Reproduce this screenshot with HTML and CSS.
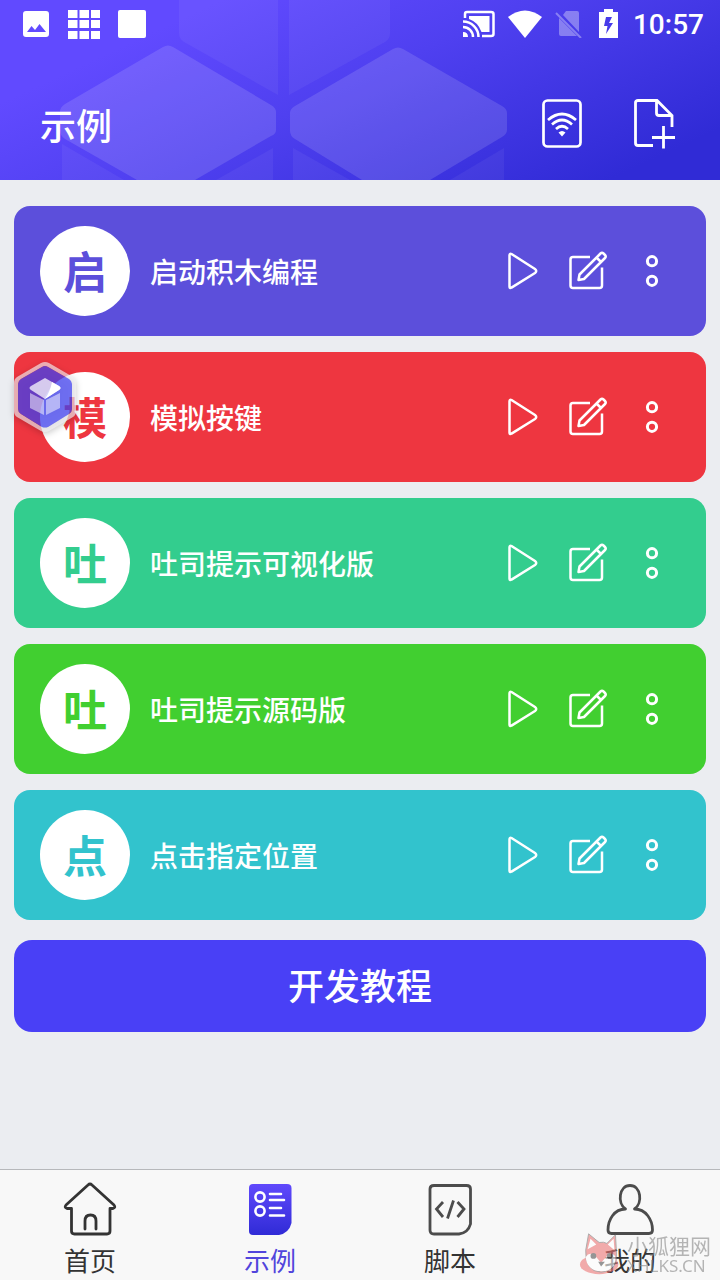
FILE: index.html
```
<!DOCTYPE html>
<html lang="zh-CN">
<head>
    <meta charset="UTF-8">
    <meta name="viewport" content="width=device-width, initial-scale=1.0">
    <title>示例</title>
    <link rel="stylesheet" href="styles.css">
</head>
<body>
    <!-- Shared icons -->
    <svg class="sprite" aria-hidden="true">
        <symbol id="icon-play" viewBox="0 0 44 44">
            <path d="M9.500 6.500V37.500Q9.500 40 11.500 38.600L35 24Q37.500 22 35 20L11.500 5Q9.500 4 9.500 6.500Z"/>
        </symbol>
        <symbol id="icon-edit" viewBox="0 0 44 44">
            <path d="M25 8H8Q5.500 8 5.500 10.500V36.500Q5.500 39 8 39H34.500Q37 39 37 36.500V18.500"/>
            <path d="M13.500 31L14.500 25.500L35.500 4.500Q37 3 38.500 4.500L40 6Q41.500 7.500 40 9L19 30ZM31.500 8.500L36 13"/>
        </symbol>
        <symbol id="icon-more" viewBox="0 0 44 44">
            <circle cx="22" cy="12.200" r="4.600"/>
            <circle cx="22" cy="31.800" r="4.600"/>
        </symbol>
    </svg>

    <header class="header">
        <svg class="header-pattern" viewBox="0 0 720 180" preserveAspectRatio="xMinYMin slice" aria-hidden="true">
            <g fill="#fff" fill-opacity="0.130">
                <path d="M163 47Q168 44 173 47L271 105Q276 108 276 112V130Q276 134 271 136L195 180H137L65 139Q60 136 60 130V112Q60 107 65 104Z"/>
                <path d="M393 49Q398 46 403 49L502 106Q507 109 507 113V130Q507 134 502 137L430 180H362L295 139Q290 136 290 131V113Q290 109 295 106Z"/>
            </g>
            <g fill="#fff" fill-opacity="0.050">
                <path d="M179 0H278V95L184 42Q179 39 179 33Z"/>
                <path d="M289 0H390V33Q390 39 385 42L289 95Z"/>
                <path d="M62 144L124 180H62Z"/>
                <path d="M273 148V180H216Z"/>
                <path d="M293 148L350 180H293Z"/>
                <path d="M504 148V180H450Z"/>
            </g>
        </svg>

        <div class="status-bar">
            <div class="status-group status-left">
                <svg width="28" height="28" viewBox="0 0 28 28" aria-hidden="true">
                    <path fill="#fff" fill-rule="evenodd" d="M4 1H24Q27 1 27 4V24Q27 27 24 27H4Q1 27 1 24V4Q1 1 4 1ZM5 22H24L17.500 14L13 20L9.500 16Z"/>
                </svg>
                <svg width="32" height="30" viewBox="0 0 32 30" fill="#fff" aria-hidden="true">
                    <path d="M0 1h9.500v8H0zM11.500 1h9.500v8h-9.500zM23 1h9v8h-9zM0 11h9.500v8H0zM11.500 11h9.500v8h-9.500zM23 11h9v8h-9zM0 22h9.500v8H0zM11.500 22h9.500v8h-9.500zM23 22h9v8h-9z"/>
                </svg>
                <svg width="28" height="28" viewBox="0 0 28 28" fill="#fff" aria-hidden="true">
                    <rect width="28" height="28" rx="2"/>
                </svg>
            </div>
            <div class="status-group status-right">
                <svg width="32" height="28" viewBox="0 0 32 28" fill="none" stroke="#fff" stroke-width="2.500" aria-hidden="true">
                    <path d="M2 8V4Q2 2 4 2H28Q30.500 2 30.500 4V24Q30.500 26 28 26H19"/>
                    <path d="M0 11.500A15.500 15.500 0 0 1 15.500 27M0 17A10 10 0 0 1 10 27"/>
                    <path fill="#fff" stroke="none" d="M6 6H26.500V22H18.500Q15 12 6 9ZM0 22Q5 22 5 27H0Z"/>
                </svg>
                <svg width="36" height="28" viewBox="0 0 36 28" fill="#fff" aria-hidden="true">
                    <path d="M1 7Q18-6 35 7L18 28Z"/>
                </svg>
                <svg width="28" height="28" viewBox="0 0 28 28" opacity="0.340" aria-hidden="true">
                    <path fill="#fff" d="M11 1H22Q24 1 24 3V22L8 5ZM4 8L22 26H6Q4 26 4 24Z"/>
                    <path stroke="#fff" stroke-width="2" d="M1 3L26 28"/>
                </svg>
                <svg class="battery" width="20" height="30" viewBox="0 0 20 30" aria-hidden="true">
                    <path fill="#fff" fill-rule="evenodd" d="M5 0H14V3H19V29H0V3H5ZM7 8L5 17H8.500L7 25L14 14H10L13 8Z"/>
                </svg>
                <time class="clock">10:57</time>
            </div>
        </div>

        <div class="title-bar">
            <h1>示例</h1>
            <div class="title-actions">
                <button class="icon-btn" aria-label="无线连接">
                    <svg width="48" height="52" viewBox="0 0 48 52" fill="none" stroke="#fff" stroke-width="2.700" aria-hidden="true">
                        <rect x="5.500" y="2.500" width="37" height="46" rx="4"/>
                        <path d="M10 22Q24 10 38 22M14 26.500Q24 17.500 34 26.500M18 31Q24 25.500 30 31"/>
                        <path fill="#fff" stroke="none" d="M20.500 34.500Q24 31.500 27.500 34.500L24 38.500Z"/>
                    </svg>
                </button>
                <button class="icon-btn" aria-label="新建文件">
                    <svg width="48" height="52" viewBox="0 0 48 52" fill="none" stroke="#fff" stroke-width="2.800" aria-hidden="true">
                        <path d="M23 47.500H8Q5.500 47.500 5.500 45V4.500Q5.500 2.500 8 2.500H27L42 17.500V29M26.500 2.500V15Q26.500 17.500 29 17.500H42M33.500 28V50.500M22 39.500H45"/>
                    </svg>
                </button>
            </div>
        </div>
    </header>

    <!-- Script examples -->
    <main class="content">
        <ul class="card-list">
            <li class="card purple">
                <span class="avatar">启</span>
                <h2>启动积木编程</h2>
                <div class="card-actions">
                    <button aria-label="运行"><svg><use href="#icon-play"/></svg></button>
                    <button aria-label="编辑"><svg><use href="#icon-edit"/></svg></button>
                    <button class="more" aria-label="更多"><svg><use href="#icon-more"/></svg></button>
                </div>
            </li>
            <li class="card red">
                <span class="avatar">模</span>
                <h2>模拟按键</h2>
                <div class="card-actions">
                    <button aria-label="运行"><svg><use href="#icon-play"/></svg></button>
                    <button aria-label="编辑"><svg><use href="#icon-edit"/></svg></button>
                    <button class="more" aria-label="更多"><svg><use href="#icon-more"/></svg></button>
                </div>
            </li>
            <li class="card mint">
                <span class="avatar">吐</span>
                <h2>吐司提示可视化版</h2>
                <div class="card-actions">
                    <button aria-label="运行"><svg><use href="#icon-play"/></svg></button>
                    <button aria-label="编辑"><svg><use href="#icon-edit"/></svg></button>
                    <button class="more" aria-label="更多"><svg><use href="#icon-more"/></svg></button>
                </div>
            </li>
            <li class="card green">
                <span class="avatar">吐</span>
                <h2>吐司提示源码版</h2>
                <div class="card-actions">
                    <button aria-label="运行"><svg><use href="#icon-play"/></svg></button>
                    <button aria-label="编辑"><svg><use href="#icon-edit"/></svg></button>
                    <button class="more" aria-label="更多"><svg><use href="#icon-more"/></svg></button>
                </div>
            </li>
            <li class="card cyan">
                <span class="avatar">点</span>
                <h2>点击指定位置</h2>
                <div class="card-actions">
                    <button aria-label="运行"><svg><use href="#icon-play"/></svg></button>
                    <button aria-label="编辑"><svg><use href="#icon-edit"/></svg></button>
                    <button class="more" aria-label="更多"><svg><use href="#icon-more"/></svg></button>
                </div>
            </li>
        </ul>
        <button class="tutorial-btn">开发教程</button>
    </main>

    <!-- Bottom tabs -->
    <nav class="tab-bar">
        <a class="tab" href="#home">
            <svg width="56" height="56" viewBox="0 0 56 56" fill="none" stroke="#333" stroke-width="2.800" stroke-linejoin="round" stroke-linecap="round" aria-hidden="true">
                <path d="M9.500 27.500H5Q2 26.500 4 24L26 4Q28 2 30 4L52 24Q54 26.500 51 27.500H48V50Q48 53 45 53H12.500Q9.500 53 9.500 50Z"/>
                <path d="M23 48V40Q23 34 28.500 34T34 40V48"/>
            </svg>
            首页
        </a>
        <a class="tab active" href="#examples">
            <svg width="56" height="56" viewBox="0 0 56 56" aria-hidden="true">
                <defs>
                    <linearGradient id="tab-fill" x1="0" y1="0" x2="0" y2="1">
                        <stop offset="0" stop-color="#6049fc"/>
                        <stop offset="1" stop-color="#302bd6"/>
                    </linearGradient>
                </defs>
                <path fill="url(#tab-fill)" d="M11 3H45Q49.500 3 49.500 7V42Q47 52 37 54H11Q7 54 7 50V7Q7 3 11 3Z"/>
                <g fill="none" stroke="#fff" stroke-width="2.600" stroke-linecap="round">
                    <circle cx="18" cy="16" r="4.600"/>
                    <circle cx="18" cy="30" r="4.600"/>
                    <path d="M28 13H39M28 19H42M28 27H39M28 34.500H42"/>
                </g>
            </svg>
            示例
        </a>
        <a class="tab" href="#scripts">
            <svg width="56" height="56" viewBox="0 0 56 56" fill="none" stroke="#4c4c4c" stroke-width="2.800" aria-hidden="true">
                <path d="M12 4.500H44.500Q48.500 4.500 48.500 8V43Q46 52 37 53H12Q8 53 8 49V8Q8 4.500 12 4.500Z"/>
                <path d="M21 21L14.500 28L21 36M31.500 19.500L25.500 37.500M35.500 21L42 28L35.500 36"/>
            </svg>
            脚本
        </a>
        <a class="tab" href="#mine">
            <svg width="56" height="56" viewBox="0 0 56 56" fill="none" stroke="#4c4c4c" stroke-width="2.800" stroke-linejoin="round" aria-hidden="true">
                <path d="M23.500 28C15 22 17 4.500 28 4.500S41 22 32.500 28C44 28 50.500 39 50.500 49Q50.500 52.500 47 52.500H9.500Q6 52.500 6 49C6 39 12 28 23.500 28Z"/>
            </svg>
            我的
        </a>
    </nav>

    <!-- Floating assistant -->
    <button class="float-btn" aria-label="悬浮菜单">
        <svg width="64" height="72" viewBox="0 0 64 72" aria-hidden="true">
            <path fill="#f3f1f4" fill-opacity="0.650" fill-rule="evenodd" d="M28 2Q32 0 36 2L60 16Q63 18 63 22V50Q63 54 60 56L36 70Q32 72 28 70L4 56Q1 54 1 50V22Q1 18 4 16ZM29 6L8 18Q5 20 5 23V48Q5 51 8 53L29 66Q32 67 35 66L56 53Q59 51 59 48V23Q59 20 56 18L35 6Q32 4 29 6Z"/>
            <path fill="#4646ff" fill-opacity="0.700" d="M29 6Q32 4 35 6L56 18Q59 20 59 23V48Q59 51 56 53L35 66Q32 67 29 66L8 53Q5 51 5 48V23Q5 20 8 18Z"/>
            <path fill="#fff" fill-opacity="0.730" d="M32 17L46 25Q49 27 46 29L32 38L18 29Q15 27 18 25Z"/>
            <path fill="#fff" fill-opacity="0.500" d="M17 32L31 39V54L17 47ZM47 32L33 39V54L47 47Z"/>
            <path fill="#fff" d="M39 21L46 25Q49 27 46 29L32 38Q37 31 39 21Z"/>
        </svg>
    </button>

    <div class="watermark" aria-hidden="true">
        <svg width="48" height="44" viewBox="0 0 50 44">
            <ellipse cx="21" cy="33" rx="20" ry="10" fill="#ee7777"/>
            <path fill="#ee7777" stroke="#777" d="M7 18L10 1L21 10Q26 9 29 11L38 2L39 20Q41 40 23 41Q6 40 7 18Z"/>
            <path fill="#fff" d="M9 17L12 6L18 12ZM30 12L36 6L37 18ZM7 25Q11 19 17 24L23 31L30 23Q36 20 38 25Q38 40 23 40Q8 39 7 25Z"/>
            <circle cx="15" cy="24" r="3" fill="#555"/>
            <circle cx="32" cy="24" r="3" fill="#555"/>
            <path fill="#555" d="M20 30H27L23 35Z"/>
        </svg>
        <div class="watermark-text">
            <span>小狐狸网</span>
            <span class="watermark-url">XHLKS.CN</span>
        </div>
    </div>
</body>
</html>
```
FILE: styles.css
```
/* Global Styles */
* {
    margin: 0;
    padding: 0;
    box-sizing: border-box;
}

:root {
    --primary-color: #4940f6;
    --bg-color: #ebedf1;
    --text-color: #333;
}

body {
    position: relative;
    display: flex;
    flex-direction: column;
    min-height: 100vh;
    background-color: var(--bg-color);
    color: var(--text-color);
    font-family: "Noto Sans CJK SC", sans-serif;
}

button {
    border: none;
    background: none;
    color: inherit;
    font-family: inherit;
    cursor: pointer;
}

svg {
    display: block;
}

.sprite {
    position: absolute;
    width: 0;
    height: 0;
}

/* Header */
.header {
    position: relative;
    min-height: 180px;
    background: linear-gradient(155deg, #614aff 20%, #4f40f0 48%, #302bd6 90%);
    color: #fff;
}

.header-pattern {
    position: absolute;
    inset: 0;
    width: 100%;
    height: 100%;
}

.status-bar,
.title-bar {
    position: relative;
    display: flex;
    align-items: center;
    justify-content: space-between;
}

.status-bar {
    height: 48px;
    padding: 0 16px 0 22px;
}

.status-group {
    display: flex;
    align-items: center;
}

.status-left {
    gap: 18px;
}

.status-right {
    gap: 12px;
}

.battery {
    margin: 0 2px 0 4px;
}

.clock {
    padding-top: 2px;
    font-family: Roboto, sans-serif;
    font-size: 28px;
    font-weight: 500;
    line-height: 32px;
}

.status-right .clock {
    margin-left: 0;
}

.title-bar {
    padding: 48px 42px 0 40px;
}

.title-bar h1 {
    font-size: 36px;
    font-weight: 500;
    line-height: 56px;
}

.title-actions {
    display: flex;
    gap: 44px;
}

.icon-btn {
    width: 48px;
    height: 52px;
}

/* Cards */
.content {
    flex: 1;
    padding: 26px 14px;
}

.card-list {
    display: flex;
    flex-direction: column;
    gap: 16px;
    list-style: none;
}

.card {
    display: flex;
    align-items: center;
    gap: 20px;
    padding: 20px 22px 20px 26px;
    border-radius: 16px;
    background-color: currentColor;
}

.purple {
    color: #5c4fdb;
}

.red {
    color: #ee3640;
}

.mint {
    color: #33cd8e;
}

.green {
    color: #41cf30;
}

.cyan {
    color: #32c3cd;
}

.avatar {
    display: flex;
    flex-shrink: 0;
    align-items: center;
    justify-content: center;
    width: 90px;
    height: 90px;
    padding-bottom: 2px;
    border-radius: 50%;
    background-color: #fff;
    font-size: 44px;
    font-weight: 700;
    line-height: 60px;
}

.card h2 {
    flex: 1;
    color: #fff;
    font-size: 28px;
    font-weight: 500;
    line-height: 40px;
}

.card-actions {
    display: flex;
    color: #fff;
}

.card-actions button {
    display: flex;
    justify-content: center;
    width: 65px;
}

.card-actions svg {
    width: 44px;
    height: 44px;
    fill: none;
    stroke: currentColor;
    stroke-width: 2.5px;
    stroke-linejoin: round;
}

.card-actions .more svg {
    stroke-width: 3px;
}

.tutorial-btn {
    width: 100%;
    height: 92px;
    margin-top: 20px;
    padding-bottom: 4px;
    border-radius: 18px;
    background-color: var(--primary-color);
    color: #fff;
    font-size: 36px;
    font-weight: 500;
}

/* Bottom tabs */
.tab-bar {
    display: flex;
    border-top: 1px solid #b6b8bb;
    background-color: #f8f8f8;
}

.tab {
    display: flex;
    flex: 1;
    flex-direction: column;
    align-items: center;
    gap: 3px;
    padding-top: 11px;
    color: var(--text-color);
    font-size: 26px;
    line-height: 40px;
    text-decoration: none;
}

.tab.active {
    color: #5145dc;
}

/* Overlays */
.float-btn {
    position: absolute;
    top: 361px;
    left: 13px;
    filter: drop-shadow(0 2px 3px rgba(0, 0, 0, 0.3));
}

.watermark {
    position: absolute;
    right: 9px;
    bottom: 4px;
    display: flex;
    align-items: flex-end;
    opacity: 0.6;
    pointer-events: none;
}

.watermark-text {
    display: flex;
    flex-direction: column;
    color: #888;
    font-size: 21px;
    line-height: 22px;
}

.watermark-url {
    font-family: "Noto Sans", sans-serif;
    font-size: 17px;
    line-height: 20px;
}
```
